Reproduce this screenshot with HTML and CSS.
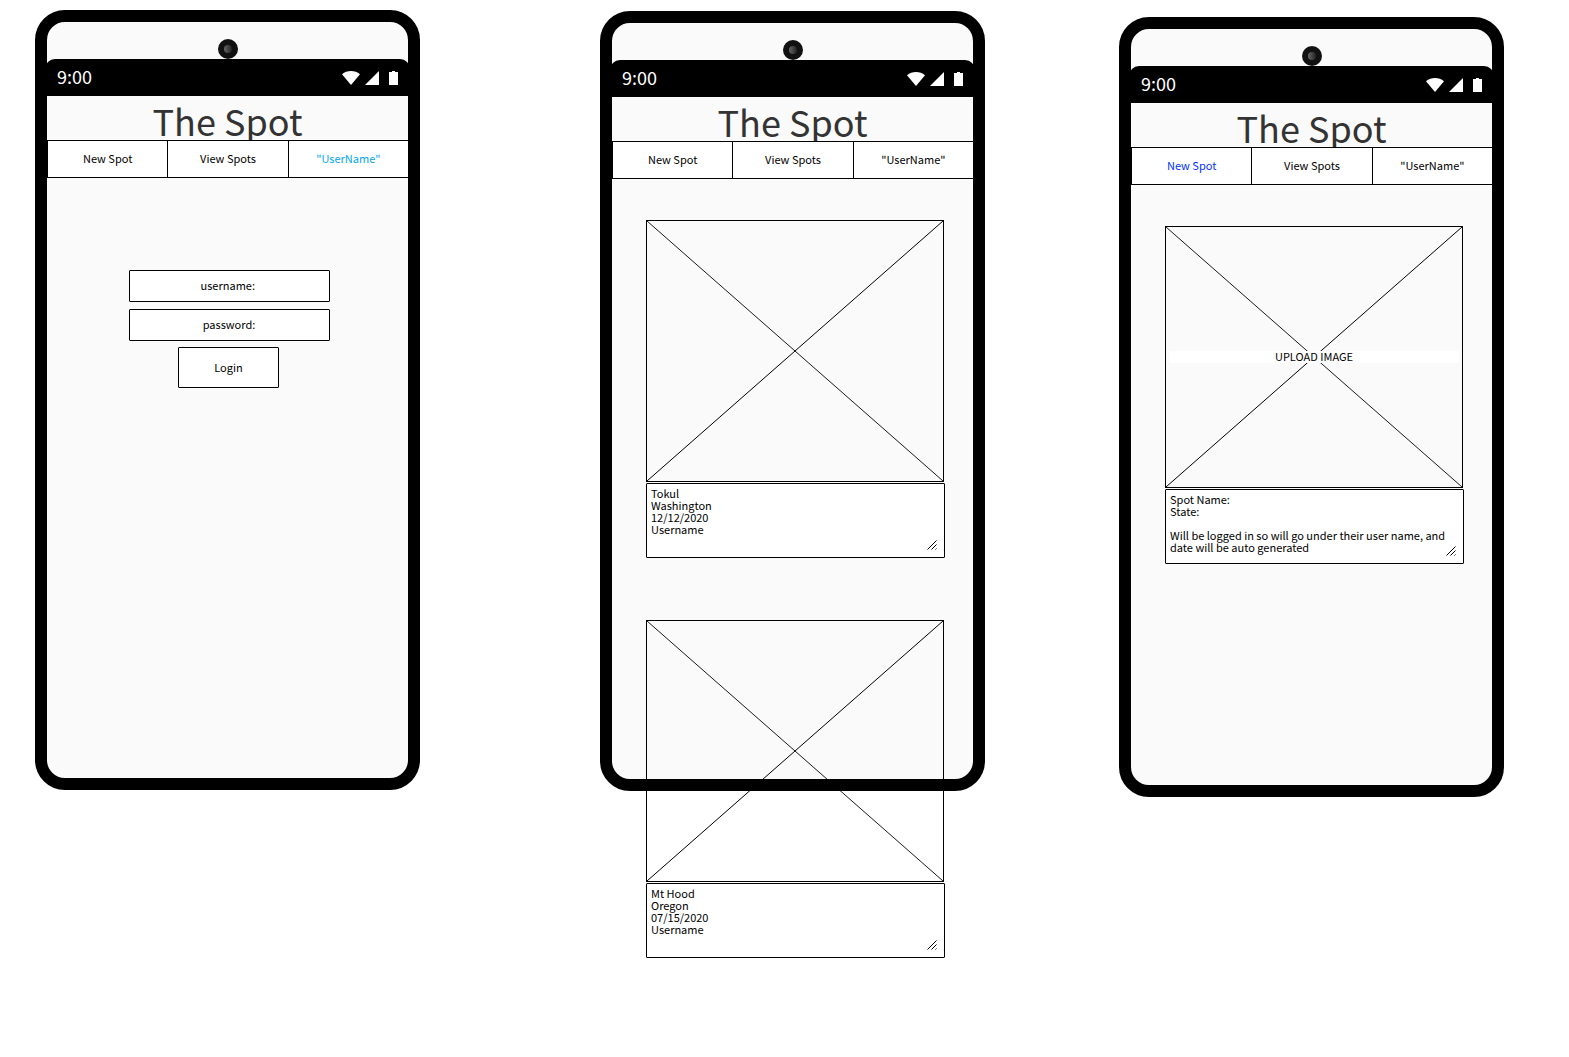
FILE: index.html
```html
<!DOCTYPE html>
<html lang="en">
<head>
<meta charset="utf-8">
<meta name="viewport" content="width=device-width, initial-scale=1">
<title>The Spot</title>
<link rel="stylesheet" href="styles.css">
</head>
<body>
<svg width="0" height="0" class="sprite" aria-hidden="true">
  <symbol id="status-icons" viewBox="0 0 56 14">
    <path d="M0 3.2C2.6 1 5.600 0 9 0s6.400 1 9 3.200L9 14z"/>
    <path d="M37 0v14H23z"/>
    <path d="M47 1h3V0h3v1h3v13h-9z"/>
  </symbol>
  <symbol id="cross" viewBox="0 0 296 260" preserveAspectRatio="none">
    <path d="M0 0L296 260" stroke="#000" stroke-width=".9"/>
    <path d="M296 0L0 260" stroke="#000" stroke-width="1"/>
  </symbol>
  <symbol id="grip" viewBox="0 0 10 10">
    <path d="M.5 9.500l9-9M4.500 9.500l5-5M8.500 9.500l1-1" stroke="#000" fill="none"/>
  </symbol>
</svg>
<main class="board">
  <section class="phone" aria-label="Log in">
    <div class="camera"></div>
    <div class="status"><span>9:00</span><svg class="status-icons"><use href="#status-icons"/></svg></div>
    <h1 class="title">The Spot</h1>
    <nav class="tabs">
      <a href="#new">New Spot</a>
      <a href="#view">View Spots</a>
      <a href="#user" class="tab-user">"UserName"</a>
    </nav>
    <form class="login">
      <input class="field" type="text" aria-label="username" placeholder="username: ">
      <input class="field" type="password" aria-label="password" placeholder="password:">
      <button class="login-button" type="button">Login</button>
    </form>
  </section>

  <section class="phone phone-view" id="view" aria-label="View spots">
    <div class="camera"></div>
    <div class="status"><span>9:00</span><svg class="status-icons"><use href="#status-icons"/></svg></div>
    <h1 class="title">The Spot</h1>
    <nav class="tabs">
      <a href="#new">New Spot</a>
      <a href="#view">View Spots</a>
      <a href="#user">"UserName"</a>
    </nav>
    <div class="spots">
      <article class="spot">
        <div class="picture"><svg class="cross"><use href="#cross"/></svg></div>
        <div class="details">
          <textarea aria-label="Tokul details">Tokul
Washington
12/12/2020
Username</textarea>
          <svg class="grip"><use href="#grip"/></svg>
        </div>
      </article>
      <article class="spot">
        <div class="picture"><svg class="cross"><use href="#cross"/></svg></div>
        <div class="details">
          <textarea aria-label="Mt Hood details">Mt Hood
Oregon
07/15/2020
Username</textarea>
          <svg class="grip"><use href="#grip"/></svg>
        </div>
      </article>
    </div>
  </section>

  <section class="phone phone-new" id="new" aria-label="New spot">
    <div class="camera"></div>
    <div class="status"><span>9:00</span><svg class="status-icons"><use href="#status-icons"/></svg></div>
    <h1 class="title">The Spot</h1>
    <nav class="tabs">
      <a href="#new" class="tab-new">New Spot</a>
      <a href="#view">View Spots</a>
      <a href="#user">"UserName"</a>
    </nav>
    <div class="spots">
      <article class="spot">
        <div class="picture"><svg class="cross"><use href="#cross"/></svg><button class="upload" type="button">UPLOAD IMAGE</button></div>
        <div class="details">
          <textarea aria-label="New spot details">Spot Name:
State:

Will be logged in so will go under their user name, and date will be auto generated</textarea>
          <svg class="grip"><use href="#grip"/></svg>
        </div>
      </article>
    </div>
  </section>
</main>
</body>
</html>
```
FILE: styles.css
```css
*, *::before, *::after { box-sizing: border-box; }

body {
  margin: 0;
  background: #fff;
  color: #000;
  font: 11px/12px "Noto Sans CJK SC", "Noto Sans", sans-serif;
}

input, button, textarea {
  margin: 0;
  border: 1px solid #000;
  border-radius: 1px;
  background: #fff;
  color: inherit;
  font: inherit;
}

.sprite { position: absolute; }

/* Three devices; the space between them takes up the rest of the row */
.board {
  display: grid;
  grid-template-columns: 385px 180fr 385px 134fr 385px;
  align-items: start;
  min-height: 100vh;
  padding: 10px 65px 100px 35px;
}

.phone {
  grid-column: 1;
  grid-row: 1;
  height: 780px;
  border: 12px solid #000;
  border-radius: 30px;
  padding-top: 17px;
  background: #fafafa;
}
/* The list of spots runs on below the device */
.phone-view { grid-column: 3; margin: 1px 0 168px; }
.phone-new { grid-column: 5; margin-top: 7px; }

.camera {
  display: grid;
  place-items: center;
  width: 20px;
  height: 20px;
  margin: 0 auto;
  border-radius: 50%;
  background: #111;
}
.camera::before {
  content: "";
  width: 8px;
  height: 8px;
  border-radius: 50%;
  background: linear-gradient(90deg, #666, #222);
}

.status {
  display: flex;
  align-items: center;
  justify-content: space-between;
  height: 37px;
  margin: 0 -2px;
  padding: 1px 12px 0;
  border-radius: 10px 10px 0 0;
  background: #000;
  color: #fff;
  font-size: 18px;
  line-height: 21px;
}
.status span { padding-bottom: 3px; }
.status-icons { width: 56px; height: 14px; fill: #fff; }

.title {
  height: 44px;
  margin: 0;
  color: #333;
  font-size: 36px;
  font-weight: 400;
  line-height: 48px;
  text-align: center;
}

/* Sits over the descenders of the title */
.tabs {
  position: relative;
  display: grid;
  grid-template-columns: repeat(3, 1fr);
  height: 38px;
  border: solid #000;
  border-width: 1px 0;
  background: #fff;
}
.tabs a {
  display: flex;
  align-items: center;
  justify-content: center;
  padding-bottom: 2px;
  border-left: 1px solid #000;
  color: #000;
  text-decoration: none;
}
.tabs .tab-user { color: #02a7f0; }
.tabs .tab-new { color: #0033ff; }

.login {
  display: flex;
  flex-direction: column;
  align-items: center;
  gap: 6px;
  padding: 92px 0 0 3px;
}
.field {
  width: 201px;
  height: 32px;
  padding: 0 2px 2px;
  text-align: center;
}
.field + .field { margin-top: 1px; }
.field::placeholder { color: #000; opacity: 1; }
.login-button { width: 101px; height: 41px; margin-right: 1px; padding: 0 0 2px; }

.spots {
  display: grid;
  gap: 62px;
  padding: 41px 28px 0 34px;
}
.spot { display: grid; gap: 1px; }

.picture {
  display: grid;
  align-items: center;
  height: 262px;
  margin-right: 1px;
  border: 1px solid #000;
}
.picture > * { grid-area: 1 / 1; }
.cross { width: 100%; height: 260px; }
.upload {
  z-index: 1;
  height: 12px;
  margin: 0 3px;
  border: 0;
  padding: 0 0 2px;
  line-height: 10px;
}

.details { position: relative; display: grid; }
.details textarea {
  height: 75px;
  padding: 3px 4px;
  overflow: hidden;
  resize: none;
}
.grip {
  position: absolute;
  right: 8px;
  bottom: 8px;
  width: 10px;
  height: 10px;
}

@media (max-width: 1260px) {
  .board { grid-template-columns: 385px; gap: 40px; justify-content: center; padding: 10px; }
  .phone { grid-column: 1; grid-row: auto; }
}
```
